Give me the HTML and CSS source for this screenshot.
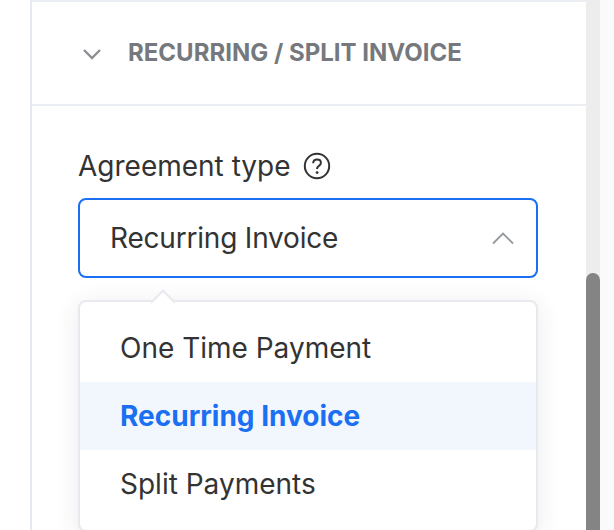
FILE: index.html
```html
<!DOCTYPE html>
<html>
	<head>
		<meta charset="UTF-8">
		<title>Agreement type</title>
		<link rel="stylesheet" href="styles.css">
	</head>
	<body>
		<div class="page">
			<div class="panel">
				<div class="panel-head">
					<svg class="head-chevron" width="20" height="12" viewBox="0 0 20 12"><path d="M2 2l8 8 8-8" fill="none" stroke="#8c9094" stroke-width="2.4"/></svg>
					<h2>RECURRING / SPLIT INVOICE</h2>
				</div>
				<div class="panel-body">
					<div class="label">
						<span>Agreement type</span>
						<svg width="28" height="28" viewBox="0 0 28 28"><circle cx="14" cy="14" r="12.2" fill="none" stroke="#333" stroke-width="2"/><path d="M10.2 11.2c0-2.3 1.700-3.800 3.900-3.800 2.200 0 3.800 1.400 3.800 3.300 0 1.500-.8 2.300-2 3.100-1.200.8-1.800 1.400-1.800 2.800v.5" fill="none" stroke="#333" stroke-width="2"/><circle cx="14.100" cy="20.600" r="1.400" fill="#333"/></svg>
					</div>
					<div class="select">
						<span>Recurring Invoice</span>
						<svg width="22" height="14" viewBox="0 0 22 14"><path d="M1 12.500l10-10 10 10" fill="none" stroke="#96999c" stroke-width="1.800"/></svg>
					</div>
					<div class="dropdown">
						<div class="option">One Time Payment</div>
						<div class="option selected">Recurring Invoice</div>
						<div class="option">Split Payments</div>
					</div>
				</div>
			</div>
			<div class="scrollbar">
				<div class="thumb"></div>
			</div>
		</div>
	</body>
</html>
```

FILE: styles.css
```css
*{
	margin: 0;
	padding: 0;
	box-sizing: border-box;
}
html,body{
	height: 530px;
	overflow: hidden;
	background: #fff;
}
body{
	font-family: Inter, "Liberation Sans", sans-serif;
	color: #333;
}
.page{
	display: flex;
	height: 530px;
	padding-left: 30px;
}
.panel{
	flex: 1;
	min-width: 0;
	height: 530px;
	overflow: hidden;
	border-top: 2px solid #ebeef3;
	border-left: 2px solid #e4e9f1;
}
.panel-head{
	display: flex;
	align-items: center;
	height: 104px;
	padding-left: 50px;
	border-bottom: 2px solid #ebeef3;
}
.head-chevron{
	margin-top: 2px;
	margin-right: 26px;
}
.panel-head h2{
	font-size: 24px;
	font-weight: 700;
	color: #75797d;
	white-space: nowrap;
	margin-top: -1px;
}
.panel-body{
	padding: 43px 48px 0 46px;
}
.label{
	display: flex;
	align-items: center;
	gap: 12px;
	height: 34px;
	font-size: 28px;
	margin-bottom: 15px;
}
.select{
	display: flex;
	align-items: center;
	justify-content: space-between;
	height: 80px;
	padding: 0 22px 0 30px;
	border: 2px solid #1a6ff2;
	border-radius: 8px;
	font-size: 28px;
	letter-spacing: -.2px;
}
.dropdown{
	position: relative;
	margin-top: 22px;
	padding: 12px 0;
	background: #fff;
	border: 2px solid #e7e9ee;
	border-radius: 8px;
	box-shadow: 0 4px 24px rgba(40,50,70,.1);
}
.dropdown:before{
	content: "";
	position: absolute;
	top: -9px;
	left: 74px;
	width: 16px;
	height: 16px;
	background: #fff;
	border-top: 2px solid #e7e9ee;
	border-left: 2px solid #e7e9ee;
	transform: rotate(45deg);
}
.option{
	position: relative;
	height: 68px;
	line-height: 68px;
	padding-left: 40px;
	font-size: 28px;
}
.option.selected{
	background: #f2f7fe;
	color: #1a6ff2;
	font-weight: 700;
}
.scrollbar{
	flex: none;
	width: 28px;
	height: 530px;
	overflow: hidden;
	padding-top: 273px;
	background: linear-gradient(to right,#ededed 14px,#fafafa 14px);
}
.thumb{
	width: 14px;
	height: 257px;
	background: #848484;
	border-radius: 7px 7px 0 0;
}
```
